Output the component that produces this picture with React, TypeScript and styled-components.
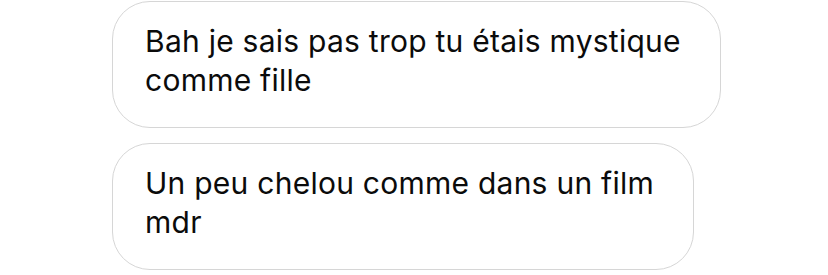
import React from "react";
import styled, { createGlobalStyle } from "styled-components";

const Global = createGlobalStyle`
  html, body { margin: 0; padding: 0; background: #ffffff; }
  body { font-family: Inter, "Liberation Sans", sans-serif; -webkit-font-smoothing: antialiased; }
`;

const Thread = styled.div`
  display: flex;
  flex-direction: column;
  align-items: flex-start;
  gap: 15px;
  padding: 1px 0 0 112px;
`;

const Bubble = styled.div<{ $w: number }>`
  box-sizing: border-box;
  width: ${(p) => p.$w}px;
  padding: 20px 26px 27px 32px;
  border: 1.5px solid #d6d6d6;
  border-radius: 38px;
  background: #ffffff;
  color: #0b0b0b;
  font-size: 30px;
  line-height: 39px;
  letter-spacing: 0.25px;
`;

export default function App() {
  return (
    <>
      <Global />
      <Thread>
        <Bubble $w={609}>Bah je sais pas trop tu étais mystique comme fille</Bubble>
        <Bubble $w={582}>Un peu chelou comme dans un film mdr</Bubble>
      </Thread>
    </>
  );
}
